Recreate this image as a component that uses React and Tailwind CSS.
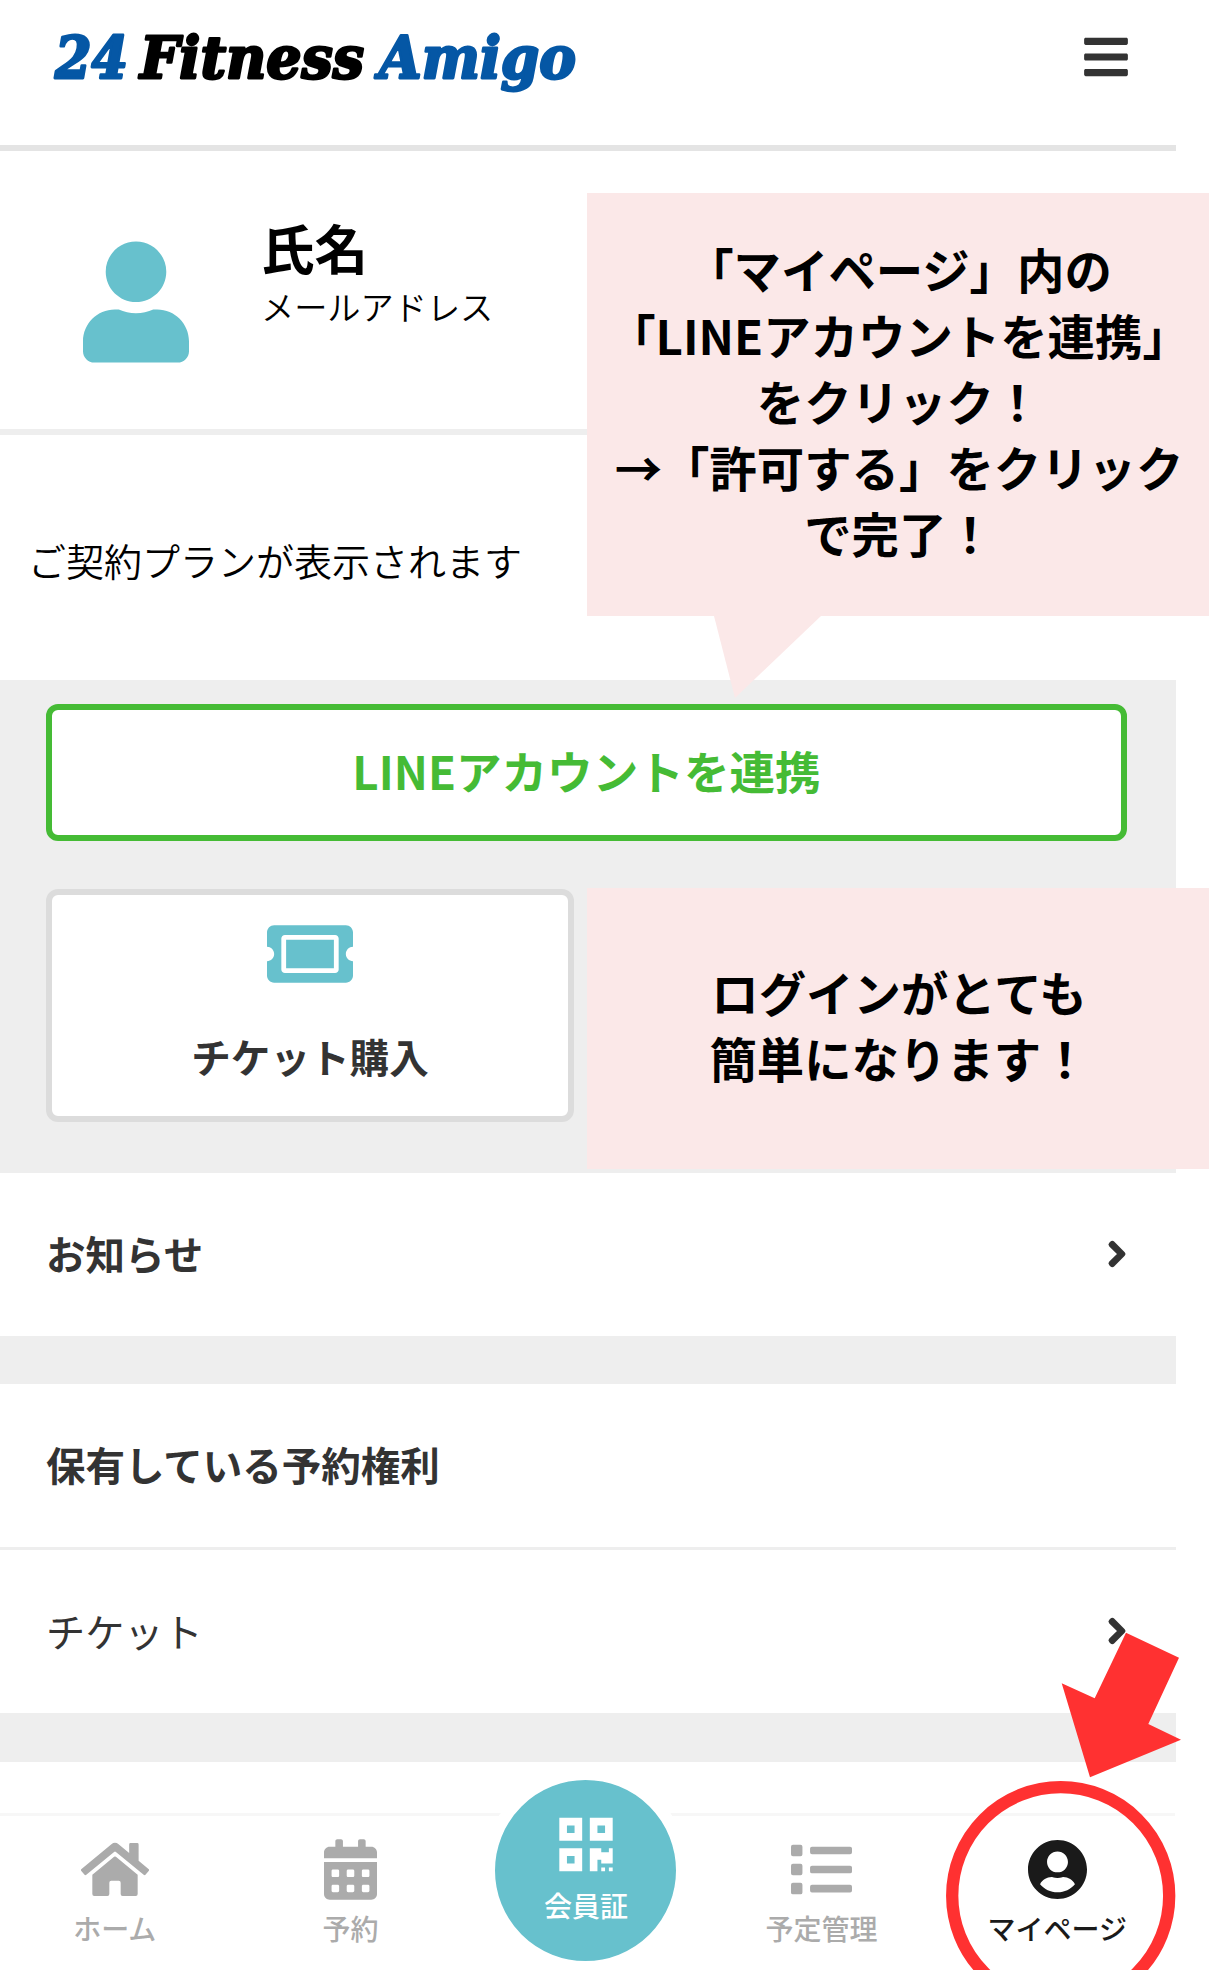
import React from "react";
import {
  FaBars,
  FaCalendarAlt,
  FaChevronRight,
  FaHome,
  FaList,
  FaQrcode,
  FaTicketAlt,
  FaUser,
  FaUserCircle,
} from "react-icons/fa";

function Logo() {
  return (
    <svg
      width="550"
      height="110"
      viewBox="0 0 550 110"
      className="overflow-visible font-['DejaVu_Serif','Liberation_Serif',serif] text-[58px] font-bold italic"
      strokeWidth="2.8"
      strokeLinejoin="round"
    >
      <text x="15" y="78" textLength="73" lengthAdjust="spacingAndGlyphs" fill="#0557a5" stroke="#0557a5">
        24
      </text>
      <text x="100" y="78" textLength="224" lengthAdjust="spacingAndGlyphs" fill="#000000" stroke="#000000">
        Fitness
      </text>
      <text x="339" y="78" textLength="197" lengthAdjust="spacingAndGlyphs" fill="#0557a5" stroke="#0557a5">
        Amigo
      </text>
    </svg>
  );
}

function MenuRow({ label, bold, arrow }) {
  return (
    <div className="flex h-[163px] items-center justify-between pr-[50px] pl-[46px]">
      <span
        className={
          bold
            ? "mb-[3px] text-[39.5px] leading-none font-bold text-[#333333]"
            : "mb-[2px] text-[39.2px] leading-none text-[#333333]"
        }
      >
        {label}
      </span>
      {arrow && (
        <FaChevronRight
          className="mb-[1px] h-[28px] w-[18px] overflow-visible text-[#333333]"
          stroke="currentColor"
          strokeWidth="44"
          strokeLinejoin="round"
        />
      )}
    </div>
  );
}

function TabItem({ icon, label, active }) {
  return (
    <a
      className={
        active
          ? "flex flex-1 flex-col items-center pt-[23px] text-[#1a1a1a]"
          : "flex flex-1 flex-col items-center pt-[23px] text-[#ababab]"
      }
    >
      <span className="flex h-[61px] items-center">{icon}</span>
      <span className="mt-[14px] text-[28px] leading-none font-medium whitespace-nowrap">
        {label}
      </span>
    </a>
  );
}

function App() {
  return (
    <div className="relative h-[1970px] w-[1209px] overflow-hidden bg-white font-['Noto_Sans_CJK_JP',sans-serif] text-black">
      <div className="w-[1176px]">
        {/* Header */}
        <header className="flex h-[151px] items-start justify-between border-b-[6px] border-[#e4e4e4] pr-[48px] pl-[40px]">
          <Logo />
          <FaBars className="mt-[32px] h-[50px] w-[44px] text-[#333333]" />
        </header>

        {/* Profilo */}
        <section className="flex h-[284px] items-start border-b-[6px] border-[#eeeeee] pl-[83px]">
          <FaUser className="mt-[90px] h-[122px] w-[106px] text-[#67c1cd]" />
          <div className="mt-[68px] ml-[72px]">
            <p className="text-[53.5px] leading-[56px] font-bold">氏名</p>
            <p className="mt-[11px] text-[33.2px] leading-[40px] font-[350]">メールアドレス</p>
          </div>
        </section>

        <section className="flex h-[245px] items-center pl-[28px]">
          <p className="mt-[4px] text-[38px] leading-none font-[350]">ご契約プランが表示されます</p>
        </section>

        <section className="h-[493px] bg-[#eeeeee] pt-[24px] pl-[46px]">
          <button className="flex h-[137px] w-[1081px] items-center justify-center rounded-[12px] border-[6px] border-[#45bb35] bg-white pb-[4px] text-[45.6px] leading-none font-bold text-[#45bb35]">
            LINEアカウントを連携
          </button>
          <button className="mt-[48px] flex h-[233px] w-[528px] flex-col items-center rounded-[12px] border-[6px] border-[#dcdcdc] bg-white pt-[16px] text-[#333333]">
            <FaTicketAlt className="h-[86px] w-[86px] text-[#67c1cd]" />
            <span className="mt-[39px] text-[39.6px] leading-none font-bold">チケット購入</span>
          </button>
        </section>

        <MenuRow label="お知らせ" bold arrow />
        <div className="h-[48px] bg-[#eeeeee]" />
        <MenuRow label="保有している予約権利" bold />
        <div className="h-[3px] bg-[#eeeeee]" />
        <MenuRow label="チケット" arrow />
        <div className="h-[49px] bg-[#eeeeee]" />

        {/* Barra di navigazione */}
        <nav className="mt-[51px] -ml-[3px] flex h-[157px] w-[1178px] border-t-[3px] border-[#f7f7f7]">
          <TabItem icon={<FaHome className="h-[61px] w-[68px]" />} label="ホーム" />
          <TabItem icon={<FaCalendarAlt className="h-[61px] w-[53px]" />} label="予約" />
          <a className="flex flex-1 justify-center text-white">
            <span className="-mt-[48px] flex size-[205px] shrink-0 flex-col items-center rounded-full border-[12px] border-white bg-[#67c1cd] pt-[34px]">
              <FaQrcode className="h-[61px] w-[54px]" />
              <span className="mt-[16px] text-[28px] leading-none font-medium">会員証</span>
            </span>
          </a>
          <TabItem icon={<FaList className="h-[61px] w-[61px]" />} label="予定管理" />
          <TabItem icon={<FaUserCircle className="h-[61px] w-[59px]" />} label="マイページ" active />
        </nav>
      </div>

      {/* Fumetti */}
      <div className="absolute top-[193px] left-[587px] flex h-[423px] w-[622px] items-center justify-center bg-[#fbe8e8] pb-[7px] pl-[2px] text-center text-[47.4px] leading-[66px] font-bold whitespace-nowrap">
        <p>
          「マイページ」内の
          <br />
          「LINEアカウントを連携」
          <br />
          をクリック！
          <br />
          →「許可する」をクリック
          <br />
          で完了！
        </p>
        <svg width="110" height="84" viewBox="0 0 110 84" className="absolute top-[422px] left-[127px]">
          <path d="M0 0H108L107 1L21 83L0 1Z" fill="#fbe8e8" />
        </svg>
      </div>
      <div className="absolute top-[888px] left-[587px] flex h-[281px] w-[622px] items-center justify-center bg-[#fbe8e8] pb-[7px] pl-[2px] text-center text-[47.4px] leading-[66px] font-bold whitespace-nowrap">
        <p>
          ログインがとても
          <br />
          簡単になります！
        </p>
      </div>

      {/* Freccia e cerchio */}
      <svg width="270" height="350" viewBox="0 0 270 350" className="absolute top-[1620px] left-[939px]">
        <path
          d="M187 12.7L240 37.7L209.3 104L242 119.7L151 157.3L122.7 63.3L155.7 78.3Z"
          fill="#ff3131"
        />
        <circle cx="121.7" cy="275.7" r="108.5" fill="none" stroke="#ff3131" strokeWidth="12.3" />
      </svg>
    </div>
  );
}

export default App;
